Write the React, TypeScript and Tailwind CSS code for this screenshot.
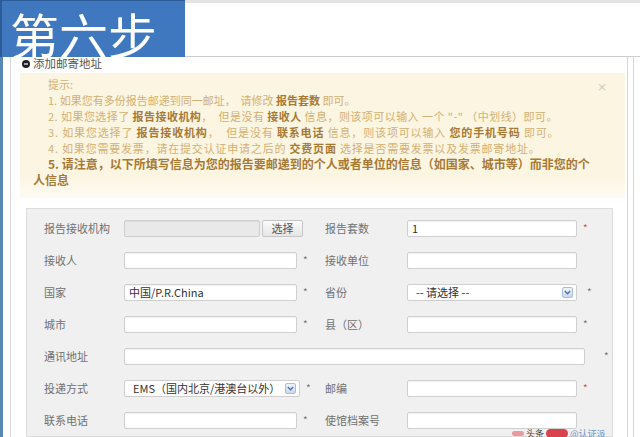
import React from "react";

function Star({ red = false, className = "" }: { red?: boolean; className?: string }) {
  return (
    <span className={`text-[10px] leading-none ${red ? "text-[#e0485a]" : "text-[#777]"} ${className}`}>*</span>
  );
}

function Input({ w, value = "", disabled = false }: { w: string; value?: string; disabled?: boolean }) {
  return (
    <div
      className={`${w} h-[17px] border border-[#cfcfcf] rounded-[2px] flex items-center pl-[4px] text-[11px] text-[#333] shadow-[inset_0_1px_1px_rgba(0,0,0,0.06)] ${
        disabled ? "bg-[#e9e9e9]" : "bg-white"
      }`}
    >
      {value}
    </div>
  );
}

function Select({ w, value }: { w: string; value: string }) {
  return (
    <div className={`${w} relative h-[17px] border border-[#cfcfcf] rounded-[2px] bg-white flex items-center pl-[8px] text-[11px] text-[#333]`}>
      <span className="whitespace-nowrap">{value}</span>
      <div className="absolute right-[3px] top-[2px] w-[11px] h-[11px] rounded-[2px] border border-[#a9bedb] bg-gradient-to-b from-[#eef3fb] to-[#c9d8ee] flex items-center justify-center">
        <svg width="7" height="5" viewBox="0 0 7 5">
          <path d="M0.8 1 L3.5 3.8 L6.2 1" fill="none" stroke="#4d6fa3" strokeWidth="1.3" />
        </svg>
      </div>
    </div>
  );
}

function Label({ children }: { children: React.ReactNode }) {
  return <div className="text-[11px] text-[#707070] whitespace-nowrap">{children}</div>;
}

const B = ({ children }: { children: React.ReactNode }) => (
  <span className="font-bold text-[#a67a35]">{children}</span>
);

export default function App() {
  return (
    <div className="relative w-[640px] h-[437px] overflow-hidden bg-white font-['Noto_Sans_CJK_SC',sans-serif]">
      <div className="flex h-[57px]">
        <div className="w-[185px] h-[57px] bg-[#3f78bf] border-l-2 border-t border-[#2c5b97] pl-[8px] pt-[10px] text-white text-[49px] leading-[45px]">
          第六步
        </div>
        <div className="flex-1 border-t-[3px] border-t-[#e4e4e4] border-b border-b-[#cdcdcd]" />
      </div>

      <div className="flex h-[380px]">
        <div className="w-[3px] bg-[#5a86b4]" />
        <div className="w-[7px]" />
        <div className="w-[618px] border-l border-r border-[#d6d6d6] flex flex-col">
          {/* heading */}
          <div className="h-[13px] flex items-center pl-[11px] gap-[3px]">
            <svg width="8" height="8" viewBox="0 0 8 8">
              <circle cx="4" cy="4" r="4" fill="#222" />
              <rect x="2" y="3.4" width="4" height="1.2" fill="#fff" />
            </svg>
            <span className="text-[11.5px] leading-[13px] text-[#555]">添加邮寄地址</span>
          </div>

          {/* notice */}
          <div className="relative mt-[3px] ml-[9px] w-[605px] pt-[3px] pb-[10px] pl-[13px] bg-[linear-gradient(to_bottom,#fcf5e2_82%,#fefbf3)] text-[11px] leading-[16px] text-[#d3b075] whitespace-nowrap">
            <span className="absolute right-[18px] top-[6px] text-[10px] text-[#bbb]">×</span>
            <div className="pl-[15px]">提示:</div>
            <div className="pl-[15px]">
              1. 如果您有多份报告邮递到同一邮址，&nbsp; 请修改 <B>报告套数</B> 即可。
            </div>
            <div className="pl-[15px] tracking-[0.45px]">
              2. 如果您选择了 <B>报告接收机构</B>，&nbsp; 但是没有 <B>接收人</B> 信息，则该项可以输入 一个 "-" （中划线）即可。
            </div>
            <div className="pl-[15px] tracking-[0.85px]">
              3. 如果您选择了 <B>报告接收机构</B>，&nbsp; 但是没有 <B>联系电话</B> 信息，则该项可以输入 <B>您的手机号码</B> 即可。
            </div>
            <div className="pl-[15px] tracking-[0.8px]">
              4. 如果您需要发票，请在提交认证申请之后的 <B>交费页面</B> 选择是否需要发票以及发票邮寄地址。
            </div>
            <div className="indent-[15px] text-[12px] font-bold text-[#a67a35]">
              5. 请注意，以下所填写信息为您的报告要邮递到的个人或者单位的信息（如国家、城市等）而非您的个
              <br />
              人信息
            </div>
          </div>

          {/* form */}
          <div className="mt-[10px] ml-[15px] w-[587px] flex-1 border border-[#dcdcdc] bg-[#f0f0f0] pt-[3px] pl-[17px]">
            <div className="grid grid-cols-[80px_176px_25px_82px_170px_1fr] auto-rows-[32px] items-center">
              {/* row 1 */}
              <Label>报告接收机构</Label>
              <div className="col-span-2 flex items-center">
                <Input w="w-[136px]" disabled />
                <div className="ml-[2px] w-[41px] h-[17px] border border-[#c6c6c6] rounded-[2px] bg-gradient-to-b from-[#fafafa] to-[#e6e6e6] flex items-center justify-center text-[11px] text-[#555]">
                  选择
                </div>
              </div>
              <Label>报告套数</Label>
              <Input w="w-[170px]" value="1" />
              <Star red className="pl-[6px]" />

              {/* row 2 */}
              <Label>接收人</Label>
              <Input w="w-[173px]" />
              <Star className="pl-[3px]" />
              <Label>接收单位</Label>
              <Input w="w-[170px]" />
              <div />

              {/* row 3 */}
              <Label>国家</Label>
              <Input w="w-[173px]" value="中国/P.R.China" />
              <Star className="pl-[3px]" />
              <Label>省份</Label>
              <Select w="w-[170px]" value="-- 请选择 --" />
              <Star className="pl-[10px]" />

              {/* row 4 */}
              <Label>城市</Label>
              <Input w="w-[173px]" />
              <Star className="pl-[3px]" />
              <Label>县（区）</Label>
              <Input w="w-[170px]" />
              <Star className="pl-[6px]" />

              {/* row 5 */}
              <Label>通讯地址</Label>
              <div className="col-span-5 flex items-center">
                <Input w="w-[461px]" />
                <Star className="ml-[19px]" />
              </div>

              {/* row 6 */}
              <Label>投递方式</Label>
              <Select w="w-[176px]" value="EMS（国内北京/港澳台以外）" />
              <Star className="pl-[6px]" />
              <Label>邮编</Label>
              <Input w="w-[170px]" />
              <Star red className="pl-[6px]" />

              {/* row 7 */}
              <Label>联系电话</Label>
              <Input w="w-[173px]" />
              <Star className="pl-[3px]" />
              <Label>使馆档案号</Label>
              <Input w="w-[170px]" />
              <div />
            </div>
          </div>
        </div>
        <div className="w-[5px]" />
        <div className="w-px bg-[#d6d6d6]" />
      </div>

      {/* watermark */}
      <div className="absolute left-[512px] top-[429px] flex items-center gap-[2px] text-[9px] leading-[9px]">
        <div className="w-[12px] h-[5px] rounded-full bg-[#e79aa0]" />
        <span className="text-[#444]">头条</span>
        <div className="w-[22px] h-[9px] rounded-full bg-[#d8434d]" />
        <span className="text-[#6d8fc4]">@认证派</span>
      </div>
    </div>
  );
}
